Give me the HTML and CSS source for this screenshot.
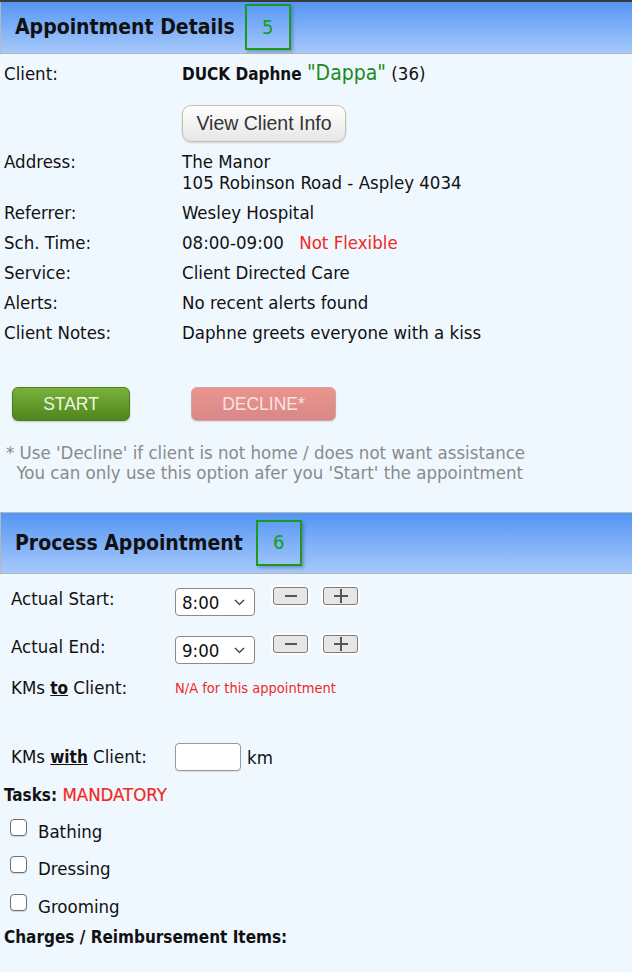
FILE: index.html
```html
<!DOCTYPE html>
<html lang="en">
<head>
  <meta charset="UTF-8" />
  <meta name="viewport" content="width=device-width, initial-scale=1.0"/>
  <title>Appointment</title>
  <link rel="stylesheet" href="styles.css">
</head>
<body>
  <section class="panel panel-first">
    <div class="panel-head">
      <h2>Appointment Details</h2>
      <span class="step">5</span>
    </div>

    <div class="details">
      <div class="label">Client:</div>
      <div class="value"><b>DUCK Daphne</b> <span class="nick">"Dappa"</span> (36)</div>

      <div></div>
      <div class="value"><button class="btn-info">View Client Info</button></div>

      <div class="label">Address:</div>
      <div class="value">The Manor<br>105 Robinson Road - Aspley 4034</div>

      <div class="label">Referrer:</div>
      <div class="value">Wesley Hospital</div>

      <div class="label">Sch. Time:</div>
      <div class="value">08:00-09:00 <span class="warn">Not Flexible</span></div>

      <div class="label">Service:</div>
      <div class="value">Client Directed Care</div>

      <div class="label">Alerts:</div>
      <div class="value">No recent alerts found</div>

      <div class="label">Client Notes:</div>
      <div class="value">Daphne greets everyone with a kiss</div>
    </div>

    <div class="actions">
      <button class="btn-start">START</button>
      <button class="btn-decline" disabled>DECLINE*</button>
    </div>

    <p class="hint">* Use 'Decline' if client is not home / does not want assistance<br>&nbsp;&nbsp;You can only use this option afer you 'Start' the appointment</p>
  </section>

  <section class="panel">
    <div class="panel-head panel-head-tall">
      <h2>Process Appointment</h2>
      <span class="step step-wide">6</span>
    </div>

    <div class="process">
      <div class="row">
        <div class="plabel">Actual Start:</div>
        <div class="select-wrap">
          <select class="time"><option>8:00</option></select>
          <svg class="chev" width="11" height="7" viewBox="0 0 11 7"><path d="M1 1l4.5 4.5L10 1" fill="none" stroke="#333" stroke-width="1.2"/></svg>
        </div>
        <button class="step-btn"><svg width="16" height="14" viewBox="0 0 16 14"><path d="M2 7h12" stroke="#555" stroke-width="2"/></svg></button>
        <button class="step-btn"><svg width="16" height="14" viewBox="0 0 16 14"><path d="M1 7h14M8 0v14" stroke="#555" stroke-width="2"/></svg></button>
      </div>
      <div class="row row-end">
        <div class="plabel">Actual End:</div>
        <div class="select-wrap">
          <select class="time"><option>9:00</option></select>
          <svg class="chev" width="11" height="7" viewBox="0 0 11 7"><path d="M1 1l4.5 4.5L10 1" fill="none" stroke="#333" stroke-width="1.2"/></svg>
        </div>
        <button class="step-btn"><svg width="16" height="14" viewBox="0 0 16 14"><path d="M2 7h12" stroke="#555" stroke-width="2"/></svg></button>
        <button class="step-btn"><svg width="16" height="14" viewBox="0 0 16 14"><path d="M1 7h14M8 0v14" stroke="#555" stroke-width="2"/></svg></button>
      </div>
      <div class="row row-kms">
        <div class="plabel">KMs <u><b>to</b></u> Client:</div>
        <span class="na">N/A for this appointment</span>
      </div>
      <div class="row row-with">
        <div class="plabel">KMs <u><b>with</b></u> Client:</div>
        <input class="km" type="text"> <span class="unit">km</span>
      </div>
    </div>

    <div class="tasks">
      <div class="tasks-title">Tasks: <span class="mandatory">MANDATORY</span></div>
      <label class="task"><input type="checkbox"> Bathing</label>
      <label class="task"><input type="checkbox"> Dressing</label>
      <label class="task"><input type="checkbox"> Grooming</label>
      <div class="tasks-title">Charges / Reimbursement Items:</div>
    </div>
  </section>
</body>
</html>
```

FILE: styles.css
```css
:root {
  --bg: #f0f8ff;
  --text: #111;
  --muted: #8a8a8a;
  --red: #f0281e;
  --green: #1d8a1d;
}

* {
  margin: 0;
  padding: 0;
  box-sizing: border-box;
}

body {
  font-family: 'DejaVu Sans Condensed', 'DejaVu Sans', sans-serif;
  font-size: 18.5px;
  line-height: 21px;
  background-color: var(--bg);
  color: var(--text);
  width: 632px;
  height: 972px;
  overflow: hidden;
}

b {
  font-size: 17px;
}

.panel-first {
  border-top: 2px solid #3a3a3a;
}

.panel-head {
  display: flex;
  align-items: center;
  height: 52px;
  padding-left: 14px;
  background: linear-gradient(#5596f4, #a7c9fb);
  border-left: 1px solid #b8b8b8;
  border-bottom: 1px solid #b5b5b5;
}

.panel-head h2 {
  font-size: 21px;
  font-weight: bold;
  color: #111;
}

.step {
  display: flex;
  align-items: center;
  justify-content: center;
  width: 46px;
  height: 46px;
  margin: 0 0 1px 10px;
  border: 2px solid #1c9a1c;
  color: #1c9a1c;
  font-size: 20px;
  box-shadow: 2px 2px 3px rgba(40, 60, 100, 0.35);
}

.step-wide {
  margin-left: 13px;
}

.panel-head-tall {
  height: 62px;
  border-top: 1px solid #b8b8b8;
}

.details {
  display: grid;
  grid-template-columns: 178px 1fr;
  row-gap: 9px;
  padding: 9px 0 0 4px;
}

.nick {
  color: var(--green);
  font-size: 21px;
}

.btn-info {
  font-family: 'Liberation Sans', Arial, sans-serif;
  font-size: 19.5px;
  color: #333;
  width: 164px;
  height: 37px;
  margin-top: 11px;
  border: 1px solid #c9c2a0;
  border-radius: 9px;
  background: linear-gradient(#ffffff, #e6e6e6);
  box-shadow: 0 1px 2px rgba(0, 0, 0, 0.15);
}

.warn {
  color: var(--red);
  margin-left: 10px;
}

.actions {
  display: flex;
  gap: 61px;
  padding: 44px 0 0 12px;
}

.actions button {
  font-family: 'Liberation Sans', Arial, sans-serif;
  font-size: 17.5px;
  height: 34px;
  border-radius: 6px;
}

.btn-start {
  width: 118px;
  color: #eef5e0;
  background: linear-gradient(#79b13c, #4f861d);
  border: 1px solid #4b7f1c;
  box-shadow: 0 1px 2px rgba(0, 0, 0, 0.2);
}

.btn-decline {
  width: 145px;
  color: #f7e4e2;
  background: linear-gradient(#eb9490, #d88886);
  border: 1px solid #d6a09c;
  box-shadow: 0 1px 2px rgba(0, 0, 0, 0.1);
}

.hint {
  color: var(--muted);
  line-height: 20px;
  padding: 22px 0 0 6px;
  margin-bottom: 29px;
}

.process {
  padding: 14px 0 0 11px;
}

.row {
  display: flex;
  align-items: flex-start;
  height: 48px;
}

.row-end {
  height: 41px;
}

.plabel {
  width: 164px;
}

.select-wrap {
  position: relative;
}

.time {
  appearance: none;
  font-family: inherit;
  font-size: 18.5px;
  width: 80px;
  height: 28px;
  padding-left: 6px;
  border: 1px solid #8a8a8a;
  border-radius: 4px;
  background: #fff;
  color: #111;
}

.chev {
  position: absolute;
  right: 10px;
  top: 11px;
  pointer-events: none;
}

.step-btn {
  display: flex;
  align-items: center;
  justify-content: center;
  width: 35px;
  height: 18px;
  margin: -1px 0 0 18px;
  background: #e6e6e6;
  border: 1.5px solid #7a7a7a;
  border-radius: 3px;
  box-shadow: 0 0 0 2px #fff;
}

.step-btn + .step-btn {
  margin-left: 15px;
}

.row-kms {
  height: 66px;
}

.na {
  color: var(--red);
  font-size: 14.5px;
  padding-top: 1px;
}

.row-with {
  align-items: center;
  height: 28px;
}

.km {
  width: 66px;
  height: 28px;
  border: 1px solid #999;
  border-radius: 4px;
  background: #fff;
  box-shadow: 0 1px 1px rgba(0, 0, 0, 0.1);
}

.unit {
  margin-left: 6px;
}

.tasks {
  padding: 12px 0 0 4px;
}

.tasks-title {
  font-weight: bold;
  font-size: 17px;
  line-height: 24px;
}

.mandatory {
  color: var(--red);
  font-weight: normal;
  font-size: 18.5px;
  -webkit-text-stroke: 0.2px var(--red);
}

.tasks-title + .task {
  margin-top: 5.5px;
}

.task {
  display: flex;
  align-items: center;
  gap: 11px;
  height: 37.5px;
  padding-left: 6px;
}

.task input {
  appearance: none;
  width: 17px;
  height: 17px;
  margin-top: -8px;
  background: #fff;
  border: 1.5px solid #6f6f6f;
  border-radius: 4px;
  box-shadow: 0 1px 1px rgba(0, 0, 0, 0.15);
}
```
